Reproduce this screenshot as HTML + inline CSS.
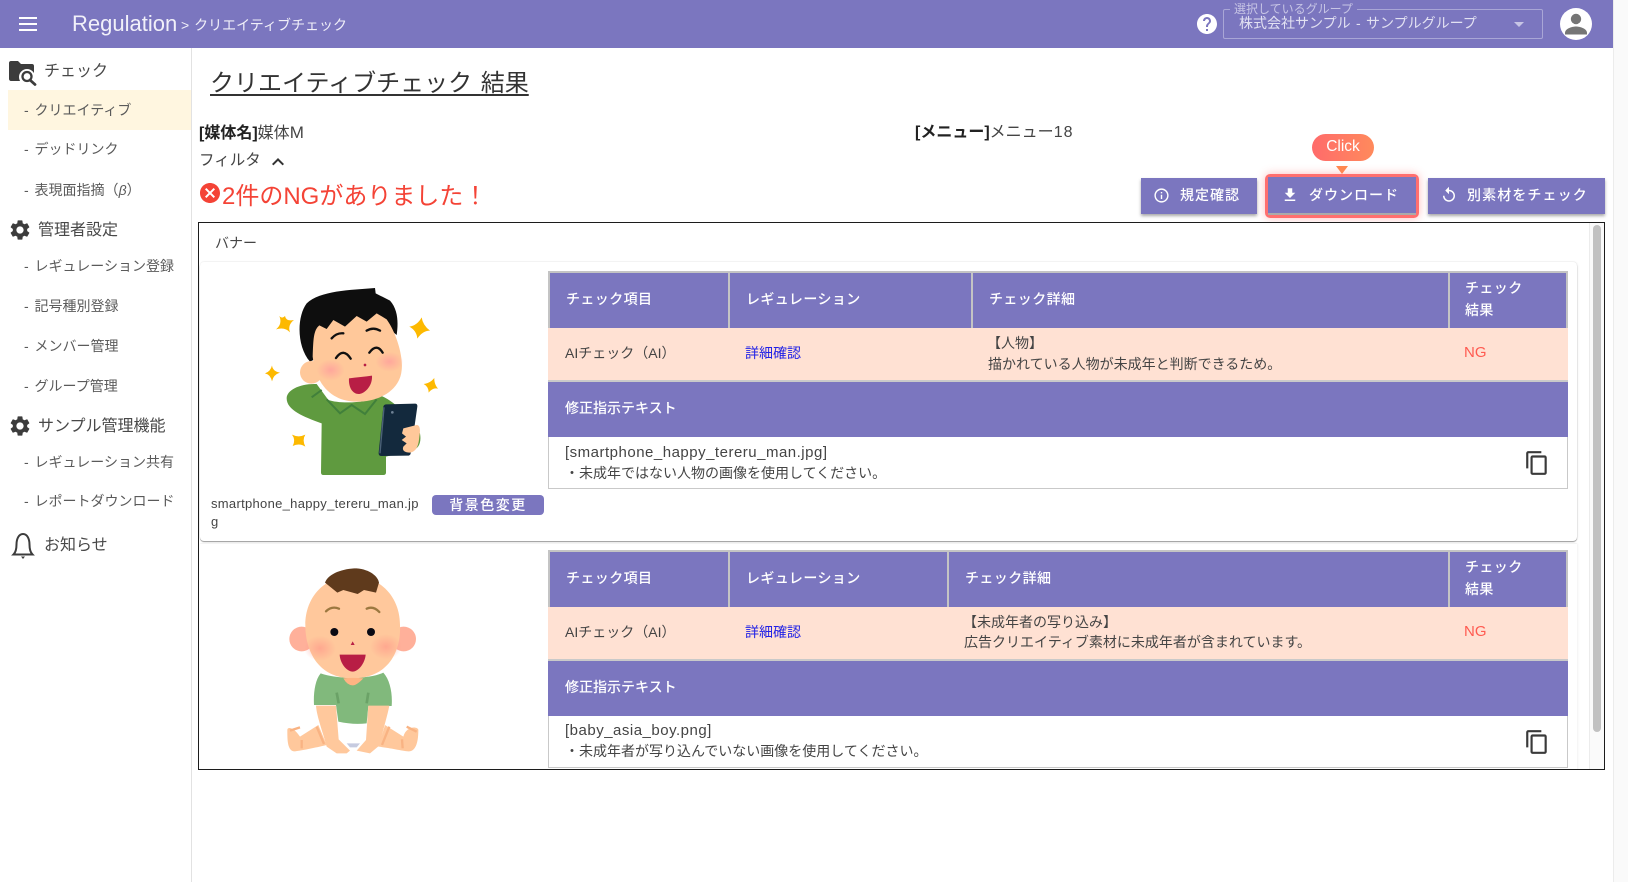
<!DOCTYPE html>
<html lang="ja"><head><meta charset="utf-8"><title>Regulation</title>
<style>
*{box-sizing:border-box}
html,body{margin:0;padding:0;width:1628px;height:882px;overflow:hidden;background:#fff;font-family:"Liberation Sans","Noto Sans CJK JP",sans-serif;color:#444;text-spacing-trim:space-all}
.a{position:absolute}
.t{position:absolute;white-space:nowrap;line-height:20px;height:20px;font-size:14px}
.m{color:#5a5a5a;left:24px;word-spacing:2px}
.s{color:#484848;font-size:16px}
.h{color:#fff;font-weight:500;letter-spacing:.4px}
.btn{position:absolute;top:178px;height:36px;background:#7b76bf;box-shadow:0 2px 3px rgba(0,0,0,.35)}
.btx{color:#fff;font-weight:500;letter-spacing:1px;top:185px}
.pu{background:#7b76bf;position:absolute}
.v{position:absolute;background:#c4c4c4;width:2px}
.fn{font-size:15px;letter-spacing:.5px;color:#444}
svg{position:absolute;display:block}
</style></head><body>

<!-- header -->
<div class="a" style="left:0;top:0;width:1613px;height:48px;background:#7b76bf"></div>
<div class="a" style="left:19px;top:17px;width:18px;height:2px;background:#fff"></div>
<div class="a" style="left:19px;top:23px;width:18px;height:2px;background:#fff"></div>
<div class="a" style="left:19px;top:29px;width:18px;height:2px;background:#fff"></div>
<div class="t" style="left:72px;top:12px;height:24px;line-height:24px;font-size:22px;color:#f1f0f9">Regulation</div>
<div class="t" style="left:181px;top:15px;color:#f1f0f9;word-spacing:1px">&gt; クリエイティブチェック</div>
<svg style="left:1195px;top:12px" width="24" height="24" viewBox="0 0 24 24"><path fill="#fff" d="M12 2C6.48 2 2 6.48 2 12s4.48 10 10 10 10-4.48 10-10S17.52 2 12 2zm1 17h-2v-2h2v2zm2.07-7.75l-.9.92C13.45 12.9 13 13.5 13 15h-2v-.5c0-1.1.45-2.1 1.17-2.83l1.24-1.26c.37-.36.59-.86.59-1.41 0-1.1-.9-2-2-2s-2 .9-2 2H8c0-2.21 1.79-4 4-4s4 1.79 4 4c0 .88-.36 1.68-.93 2.25z"/></svg>
<div class="a" style="left:1223px;top:9px;width:320px;height:30px;border:1px solid #a9a6d6;border-radius:2px"></div>
<div class="t" style="left:1230px;top:0;height:18px;line-height:18px;font-size:12px;padding:0 4px;background:#7b76bf;color:#c7c5e5">選択しているグループ</div>
<div class="t" style="left:1239px;top:13px;color:#e2e1f2;word-spacing:1.5px">株式会社サンプル - サンプルグループ</div>
<div class="a" style="left:1514px;top:22px;border:5px solid transparent;border-top-color:#c7c5e5;border-bottom:0"></div>
<svg style="left:1560px;top:8px" width="32" height="32" viewBox="0 0 32 32"><circle cx="16" cy="16" r="16" fill="#fff"/><circle cx="16" cy="11" r="5.2" fill="#757575"/><path fill="#757575" d="M5 25c0-4.500 7-6.500 11-6.500s11 2 11 6.500v1.500H5z"/></svg>

<!-- sidebar -->
<div class="a" style="left:191px;top:48px;width:1px;height:834px;background:#e2e2e2"></div>
<div class="a" style="left:8px;top:90px;width:183px;height:40px;background:#fff6e0"></div>
<svg style="left:0;top:50px" width="40" height="40" viewBox="0 0 40 40"><path fill="#3c3c3c" d="M9 13c0-1.200 .9-2 2-2h7l3 3h11c1.200 0 2 .8 2 2v13c0 1.100-.8 2-2 2H11c-1.100 0-2-.9-2-2z"/><circle cx="27" cy="27" r="8" fill="#fff"/><circle cx="27" cy="26.500" r="4.500" fill="none" stroke="#3c3c3c" stroke-width="2.300"/><path d="M30 30l5 4.500" stroke="#3c3c3c" stroke-width="2.800" stroke-linecap="round"/></svg>
<div class="t s" style="left:44px;top:62px">チェック</div>
<div class="t m" style="top:100px">- クリエイティブ</div>
<div class="t m" style="top:139px">- デッドリンク</div>
<div class="t m" style="top:180px">- 表現面指摘（<i>β</i>）</div>
<svg style="left:8px;top:218px" width="24" height="24" viewBox="0 0 24 24"><path fill="#3c3c3c" d="M19.14 12.94c.04-.3.06-.61.06-.94 0-.32-.02-.64-.07-.94l2.03-1.58c.18-.14.23-.41.12-.61l-1.92-3.32c-.12-.22-.37-.29-.59-.22l-2.39.96c-.5-.38-1.03-.7-1.62-.94l-.36-2.54c-.04-.24-.24-.41-.48-.41h-3.84c-.24 0-.43.17-.47.41l-.36 2.54c-.59.24-1.13.57-1.62.94l-2.39-.96c-.22-.08-.47 0-.59.22L2.74 8.87c-.12.21-.08.47.12.61l2.03 1.58c-.05.3-.09.63-.09.94s.02.64.07.94l-2.03 1.58c-.18.14-.23.41-.12.61l1.92 3.32c.12.22.37.29.59.22l2.39-.96c.5.38 1.03.7 1.62.94l.36 2.54c.05.24.24.41.48.41h3.84c.24 0 .44-.17.47-.41l.36-2.54c.59-.24 1.13-.56 1.62-.94l2.39.96c.22.08.47 0 .59-.22l1.92-3.32c.12-.22.07-.47-.12-.61l-2.01-1.58zM12 15.6c-1.98 0-3.6-1.62-3.6-3.6s1.62-3.6 3.6-3.6 3.6 1.62 3.6 3.6-1.620 3.6-3.6 3.6z"/></svg>
<div class="t s" style="left:38px;top:221px">管理者設定</div>
<div class="t m" style="top:256px">- レギュレーション登録</div>
<div class="t m" style="top:296px">- 記号種別登録</div>
<div class="t m" style="top:336px">- メンバー管理</div>
<div class="t m" style="top:376px">- グループ管理</div>
<svg style="left:8px;top:414px" width="24" height="24" viewBox="0 0 24 24"><path fill="#3c3c3c" d="M19.14 12.94c.04-.3.06-.61.06-.94 0-.32-.02-.64-.07-.94l2.03-1.58c.18-.14.23-.41.12-.61l-1.92-3.32c-.12-.22-.37-.29-.59-.22l-2.39.96c-.5-.38-1.03-.7-1.62-.94l-.36-2.54c-.04-.24-.24-.41-.48-.41h-3.84c-.24 0-.43.17-.47.41l-.36 2.54c-.59.24-1.13.57-1.62.94l-2.39-.96c-.22-.08-.47 0-.59.22L2.74 8.87c-.12.21-.08.47.12.61l2.03 1.58c-.05.3-.09.63-.09.94s.02.64.07.94l-2.03 1.58c-.18.14-.23.41-.12.61l1.92 3.32c.12.22.37.29.59.22l2.39-.96c.5.38 1.03.7 1.62.94l.36 2.54c.05.24.24.41.48.41h3.84c.24 0 .44-.17.47-.41l.36-2.54c.59-.24 1.13-.56 1.62-.94l2.39.96c.22.08.47 0 .59-.22l1.92-3.32c.12-.22.07-.47-.12-.61l-2.01-1.58zM12 15.6c-1.98 0-3.6-1.62-3.6-3.6s1.62-3.6 3.6-3.6 3.6 1.62 3.6 3.6-1.620 3.6-3.6 3.6z"/></svg>
<div class="t s" style="left:38px;top:417px">サンプル管理機能</div>
<div class="t m" style="top:452px">- レギュレーション共有</div>
<div class="t m" style="top:491px">- レポートダウンロード</div>
<svg style="left:8px;top:528px" width="30" height="32" viewBox="8 528 30 32"><path fill="none" stroke="#3c3c3c" stroke-width="2" d="M13.500 554.500c2.500-2.500 3-6 3-10 0-6 2.500-10.500 6.500-10.500s6.500 4.500 6.500 10.500c0 4 .5 7.500 3 10z"/><path fill="#3c3c3c" d="M21 556.500h4l-2 2.500z"/></svg>
<div class="t s" style="left:44px;top:536px">お知らせ</div>

<!-- main heading -->
<div class="t" style="left:210px;top:67px;height:34px;line-height:34px;font-size:24px;color:#333;text-decoration:underline;text-decoration-thickness:1.500px;text-underline-offset:3px;word-spacing:2px">クリエイティブチェック&nbsp;結果</div>
<div class="t" style="left:199px;top:123px;font-size:16px;line-height:20px;color:#444"><b style="color:#222">[媒体名]</b>媒体<span style="letter-spacing:.5px;font-size:17px">M</span></div>
<div class="t" style="left:915px;top:123px;font-size:16px;color:#444"><b style="color:#222">[メニュー]</b>メニュー<span style="letter-spacing:1px">18</span></div>
<div class="t" style="left:199px;top:151px;font-size:15.500px;color:#444">フィルタ</div>
<svg style="left:266px;top:150px" width="24" height="24" viewBox="0 0 24 24"><path fill="#333" d="M12 8l-6 6 1.410 1.410L12 10.830l4.590 4.580L18 14z"/></svg>
<svg style="left:198px;top:181px" width="24" height="24" viewBox="0 0 24 24"><path fill="#f44336" d="M12 2C6.470 2 2 6.470 2 12s4.470 10 10 10 10-4.470 10-10S17.530 2 12 2zm5 13.590L15.590 17 12 13.410 8.410 17 7 15.590 10.590 12 7 8.410 8.410 7 12 10.590 15.590 7 17 8.410 13.410 12 17 15.590z"/></svg>
<div class="t" style="left:222px;top:181px;height:32px;line-height:32px;font-size:24px;color:#f44336">2件のNGがありました！</div>

<!-- action buttons -->
<div class="a" style="left:1312px;top:134px;width:62px;height:27px;border-radius:13.500px;background:linear-gradient(90deg,#ff6b6b,#ff8a5c)"></div>
<div class="t" style="left:1312px;top:137px;width:62px;text-align:center;color:#fff;font-size:15.500px">Click</div>
<div class="a" style="left:1336px;top:166px;border:6px solid transparent;border-top:8px solid #ff8a50;border-bottom:0"></div>
<div class="btn" style="left:1141px;width:116px"></div>
<svg style="left:1153px;top:187px" width="17" height="17" viewBox="0 0 24 24"><path fill="#fff" d="M11 7h2v2h-2zm0 4h2v6h-2zm1-9C6.480 2 2 6.480 2 12s4.480 10 10 10 10-4.480 10-10S17.520 2 12 2zm0 18c-4.410 0-8-3.590-8-8s3.590-8 8-8 8 3.590 8 8-3.590 8-8 8z"/></svg>
<div class="t btx" style="left:1180px">規定確認</div>
<div class="a" style="left:1265px;top:174px;width:154px;height:44px;border:3px solid #ff6f6f;border-radius:5px;box-shadow:0 0 9px rgba(255,107,107,.45)"></div>
<div class="btn" style="left:1268px;width:148px;top:177px;height:38px;box-shadow:none;border-bottom:2px solid #aaa"></div>
<svg style="left:1281px;top:186px" width="18" height="18" viewBox="0 0 24 24"><path fill="#fff" d="M19 9h-4V3H9v6H5l7 7 7-7zM5 18v2h14v-2H5z"/></svg>
<div class="t btx" style="left:1309px">ダウンロード</div>
<div class="btn" style="left:1428px;width:177px"></div>
<svg style="left:1440px;top:186px" width="18" height="18" viewBox="0 0 24 24"><path fill="#fff" d="M12 5V1L7 6l5 5V7c3.310 0 6 2.690 6 6s-2.690 6-6 6-6-2.690-6-6H4c0 4.420 3.580 8 8 8s8-3.580 8-8-3.580-8-8-8z"/></svg>
<div class="t btx" style="left:1467px;letter-spacing:1.100px">別素材をチェック</div>

<!-- result box -->
<div class="a" style="left:198px;top:222px;width:1407px;height:548px;border:1px solid #1c1c1c;overflow:hidden;background:#fff">
  <div style="position:absolute;left:0;top:0;width:1407px;height:548px;transform:translate(-199px,-223px)">
    <div class="t" style="left:215px;top:233px;color:#444">バナー</div>
    <div class="a" style="left:200px;top:262px;width:1377px;height:279px;background:#fff;border-radius:4px;box-shadow:0 1px 1px rgba(0,0,0,.4),0 -1px 1px rgba(0,0,0,.04),1px 0 2px rgba(0,0,0,.05)"></div>
    <div class="a" style="left:200px;top:544px;width:1377px;height:240px;background:#fff;box-shadow:0 -1px 1px rgba(0,0,0,.04),1px 0 2px rgba(0,0,0,.05)"></div>

    <!-- man illustration -->
    <svg style="left:200px;top:260px" width="350" height="290" viewBox="0 0 1050 870">
      <defs><radialGradient id="ck"><stop offset="0" stop-color="#ff9c9c" stop-opacity=".75"/><stop offset="1" stop-color="#ff9c9c" stop-opacity="0"/></radialGradient></defs>
      <g fill="#fdb900">
        <path d="M255 168Q258 185 282 180Q262 195 270 217Q255 200 228 208Q248 192 238 168Q246 178 255 168Z"/>
        <path d="M665 172Q668 195 690 212Q668 212 652 236Q650 212 628 200Q652 196 665 172Z"/>
        <path d="M216 316Q218 334 240 338Q220 344 216 364Q212 344 195 340Q212 334 216 316Z"/>
        <path d="M703 354Q702 372 714 386Q698 382 686 398Q686 380 671 372Q690 370 703 354Z"/>
        <path d="M316 524Q306 540 316 560Q298 548 278 558Q288 540 276 524Q296 534 316 524Z"/>
      </g>
      <path fill="#5f9a3f" d="M385 420C420 432 500 430 545 408C570 420 590 435 600 450L660 520C665 550 655 565 640 570L558 590L558 638Q558 645 550 645L370 645Q363 645 363 638L365 490C310 470 260 450 260 415C260 390 300 370 350 372Z"/>
      <path d="M380 418L420 460L455 435L495 462L530 418M335 412L365 390" fill="none" stroke="#41803b" stroke-width="6"/>
      <path fill="#0e0e0e" d="M330 305C290 260 290 170 320 130C360 92 450 90 525 84L527 100L570 122C595 150 595 190 590 225L560 200L530 190L500 200L400 200L360 230L340 300Z"/>
      <circle cx="334" cy="337" r="34" fill="#ffc89a"/>
      <path fill="#ffc89a" d="M338 290C340 240 340 210 358 196L380 207L400 180L435 200L470 168L500 185L530 160L560 178C590 220 610 290 605 330C600 390 540 425 470 425C410 425 350 390 338 290Z"/>
      <ellipse cx="392" cy="330" rx="42" ry="32" fill="url(#ck)"/><ellipse cx="568" cy="305" rx="42" ry="30" fill="url(#ck)"/>
      <path d="M395 235Q410 218 430 220M500 212Q520 200 540 212M408 294Q430 262 452 296M508 278Q530 248 548 278" fill="none" stroke="#111" stroke-width="7" stroke-linecap="round"/>
      <circle cx="495" cy="315" r="4" fill="#b81e45"/>
      <path fill="#b81e45" d="M447 355C470 352 495 350 516 347C518 380 492 402 476 402C458 402 445 382 447 355Z"/>
      <path fill="#13293d" d="M558 433L645 431Q653 431 652 440L632 580Q631 587 622 587L545 588Q535 588 536 578L550 440Q551 434 558 433Z"/>
      <path d="M552 442L540 580" stroke="#4c6278" stroke-width="4"/><circle cx="577" cy="457" r="4" fill="#6f8295"/>
      <path fill="#ffc89a" d="M610 505L650 495C660 495 662 510 658 530C656 555 650 575 630 578C615 578 605 572 610 560L620 550L605 540L618 530L606 520Z"/>
    </svg>
    <div class="t" style="left:211px;top:494px;font-size:13px;letter-spacing:.3px;color:#444">smartphone_happy_tereru_man.jp</div>
    <div class="t" style="left:211px;top:512px;font-size:13px;color:#444">g</div>
    <div class="a" style="left:432px;top:495px;width:112px;height:20px;border-radius:4px;background:#7b76bf"></div>
    <div class="t" style="left:432px;top:495px;width:112px;text-align:center;color:#fff;font-weight:500;letter-spacing:1.500px">背景色変更</div>

    <!-- table 1 -->
    <div class="a" style="left:548px;top:271px;width:1020px;height:2px;background:#c4c4c4"></div>
    <div class="pu" style="left:548px;top:273px;width:1020px;height:55px"></div>
    <div class="a" style="left:548px;top:271px;width:2px;height:57px;background:#c4c4c4"></div>
    <div class="a" style="left:1566px;top:271px;width:2px;height:57px;background:#c4c4c4"></div>
    <div class="v" style="left:728px;top:273px;height:55px"></div>
    <div class="v" style="left:971px;top:273px;height:55px"></div>
    <div class="v" style="left:1448px;top:273px;height:55px"></div>
    <div class="t h" style="left:566px;top:289px">チェック項目</div>
    <div class="t h" style="left:746px;top:289px">レギュレーション</div>
    <div class="t h" style="left:989px;top:289px">チェック詳細</div>
    <div class="t h" style="left:1465px;top:278px">チェック</div>
    <div class="t h" style="left:1465px;top:300px">結果</div>
    <div class="a" style="left:548px;top:328px;width:1020px;height:52px;background:#ffe1d3"></div>
    <div class="t" style="left:565px;top:343px">AIチェック（AI）</div>
    <div class="t" style="left:745px;top:343px;color:#2222e6">詳細確認</div>
    <div class="t" style="left:987px;top:333px">【人物】</div>
    <div class="t" style="left:988px;top:354px">描かれている人物が未成年と判断できるため。</div>
    <div class="t" style="left:1464px;top:343px;color:#ff5a50;font-size:15px">NG</div>
    <div class="a" style="left:548px;top:380px;width:1020px;height:2px;background:#c9c9c9"></div>
    <div class="pu" style="left:548px;top:382px;width:1020px;height:55px"></div>
    <div class="t h" style="left:565px;top:398px;letter-spacing:0">修正指示テキスト</div>
    <div class="a" style="left:548px;top:437px;width:1020px;height:52px;border:1px solid #c9c9c9;border-top:0"></div>
    <div class="t fn" style="left:565px;top:443px">[smartphone_happy_tereru_man.jpg]</div>
    <div class="t" style="left:565px;top:463px">・未成年ではない人物の画像を使用してください。</div>
    <svg style="left:1524px;top:450px" width="26" height="26" viewBox="0 0 24 24"><path fill="#3a3a3a" d="M16 1H4c-1.100 0-2 .9-2 2v14h2V3h12V1zm3 4H8c-1.100 0-2 .9-2 2v14c0 1.100.9 2 2 2h11c1.100 0 2-.9 2-2V7c0-1.100-.9-2-2-2zm0 16H8V7h11v14z"/></svg>

    <!-- baby illustration -->
    <svg style="left:200px;top:540px" width="350" height="240" viewBox="0 0 1050 720">
      <defs><radialGradient id="ck2"><stop offset="0" stop-color="#ff9a8a" stop-opacity=".7"/><stop offset="1" stop-color="#ff9a8a" stop-opacity="0"/></radialGradient></defs>
      <circle cx="305" cy="297" r="37" fill="#ffb09a"/><circle cx="611" cy="297" r="37" fill="#ffb09a"/>
      <path fill="#fff" d="M415 530L497 530L497 610Q460 622 418 605Z"/>
      <path fill="#c6cbe0" d="M440 610L480 610L470 622L450 622Z"/>
      <path fill="#ffc89c" d="M355 555L300 590C280 560 262 560 262 570C262 600 262 635 285 634C305 632 360 620 380 615Z"/>
      <path fill="#ffc89c" d="M555 555L610 590C620 555 655 560 655 570C655 600 650 635 625 634C605 632 560 622 535 620Z"/>
      <path fill="none" stroke="#f9b383" stroke-width="7" d="M350 560L372 612M568 560L546 615M270 572L300 562M620 560L650 575M305 600L305 625M606 598L608 625"/>
      <path fill="#81b97c" d="M362 400C410 418 510 418 550 398C570 420 578 460 575 498L505 498L500 550Q460 555 415 545L408 495L342 495C340 460 345 420 362 400Z"/>
      <path fill="#ffc89c" d="M348 497L408 497L416 598L450 632L440 640L410 640L380 620C370 580 350 530 348 497ZM505 497L568 497C562 530 548 570 540 615L510 640L470 632L498 600Z"/>
      <path d="M410 458L416 490M505 458L500 490" stroke="#6ba267" stroke-width="8"/>
      <path fill="#ffc89c" d="M458 108C540 108 600 170 600 255C604 340 560 415 458 415C360 415 316 340 316 255C316 170 375 108 458 108Z"/>
      <path fill="#ffb483" d="M430 415Q458 412 490 415Q470 436 458 436Q442 436 430 415Z"/>
      <ellipse cx="360" cy="325" rx="48" ry="38" fill="url(#ck2)"/><ellipse cx="558" cy="320" rx="48" ry="38" fill="url(#ck2)"/>
      <path fill="#5f3a1c" d="M375 128C385 100 430 85 470 85C510 88 535 110 537 128L528 158L492 150L473 162L430 150L412 158Z"/>
      <path d="M378 214Q395 197 417 206M500 206Q520 197 538 216" fill="none" stroke="#9c7840" stroke-width="7" stroke-linecap="round"/>
      <circle cx="403" cy="276" r="12" fill="#0a0a14"/><circle cx="513" cy="276" r="12" fill="#0a0a14"/>
      <path fill="#b81e45" d="M458 304L464 315L452 315Z"/>
      <path fill="#b81e45" d="M419 344L497 344C495 370 475 395 458 395C440 395 420 370 419 344Z"/>
    </svg>

    <!-- table 2 -->
    <div class="a" style="left:548px;top:550px;width:1020px;height:2px;background:#c4c4c4"></div>
    <div class="pu" style="left:548px;top:552px;width:1020px;height:55px"></div>
    <div class="a" style="left:548px;top:550px;width:2px;height:57px;background:#c4c4c4"></div>
    <div class="a" style="left:1566px;top:550px;width:2px;height:57px;background:#c4c4c4"></div>
    <div class="v" style="left:728px;top:552px;height:55px"></div>
    <div class="v" style="left:947px;top:552px;height:55px"></div>
    <div class="v" style="left:1448px;top:552px;height:55px"></div>
    <div class="t h" style="left:566px;top:568px">チェック項目</div>
    <div class="t h" style="left:746px;top:568px">レギュレーション</div>
    <div class="t h" style="left:965px;top:568px">チェック詳細</div>
    <div class="t h" style="left:1465px;top:557px">チェック</div>
    <div class="t h" style="left:1465px;top:579px">結果</div>
    <div class="a" style="left:548px;top:607px;width:1020px;height:52px;background:#ffe1d3"></div>
    <div class="t" style="left:565px;top:622px">AIチェック（AI）</div>
    <div class="t" style="left:745px;top:622px;color:#2222e6">詳細確認</div>
    <div class="t" style="left:963px;top:612px">【未成年者の写り込み】</div>
    <div class="t" style="left:964px;top:632px">広告クリエイティブ素材に未成年者が含まれています。</div>
    <div class="t" style="left:1464px;top:622px;color:#ff5a50;font-size:15px">NG</div>
    <div class="a" style="left:548px;top:659px;width:1020px;height:2px;background:#c9c9c9"></div>
    <div class="pu" style="left:548px;top:661px;width:1020px;height:55px"></div>
    <div class="t h" style="left:565px;top:677px;letter-spacing:0">修正指示テキスト</div>
    <div class="a" style="left:548px;top:716px;width:1020px;height:52px;border:1px solid #c9c9c9;border-top:0"></div>
    <div class="t fn" style="left:565px;top:721px">[baby_asia_boy.png]</div>
    <div class="t" style="left:565px;top:741px">・未成年者が写り込んでいない画像を使用してください。</div>
    <svg style="left:1524px;top:729px" width="26" height="26" viewBox="0 0 24 24"><path fill="#3a3a3a" d="M16 1H4c-1.100 0-2 .9-2 2v14h2V3h12V1zm3 4H8c-1.100 0-2 .9-2 2v14c0 1.100.9 2 2 2h11c1.100 0 2-.9 2-2V7c0-1.100-.9-2-2-2zm0 16H8V7h11v14z"/></svg>

    <!-- inner scrollbar -->
    <div class="a" style="left:1589px;top:223px;width:16px;height:547px;background:#fafafa;border-left:1px solid #ececec"></div>
    <div class="a" style="left:1593px;top:225px;width:8px;height:507px;border-radius:4px;background:#c1c1c1"></div>
  </div>
</div>

<!-- page scrollbar -->
<div class="a" style="left:1613px;top:0;width:15px;height:882px;background:#fafafa;border-left:1px solid #ececec"></div>
</body></html>
